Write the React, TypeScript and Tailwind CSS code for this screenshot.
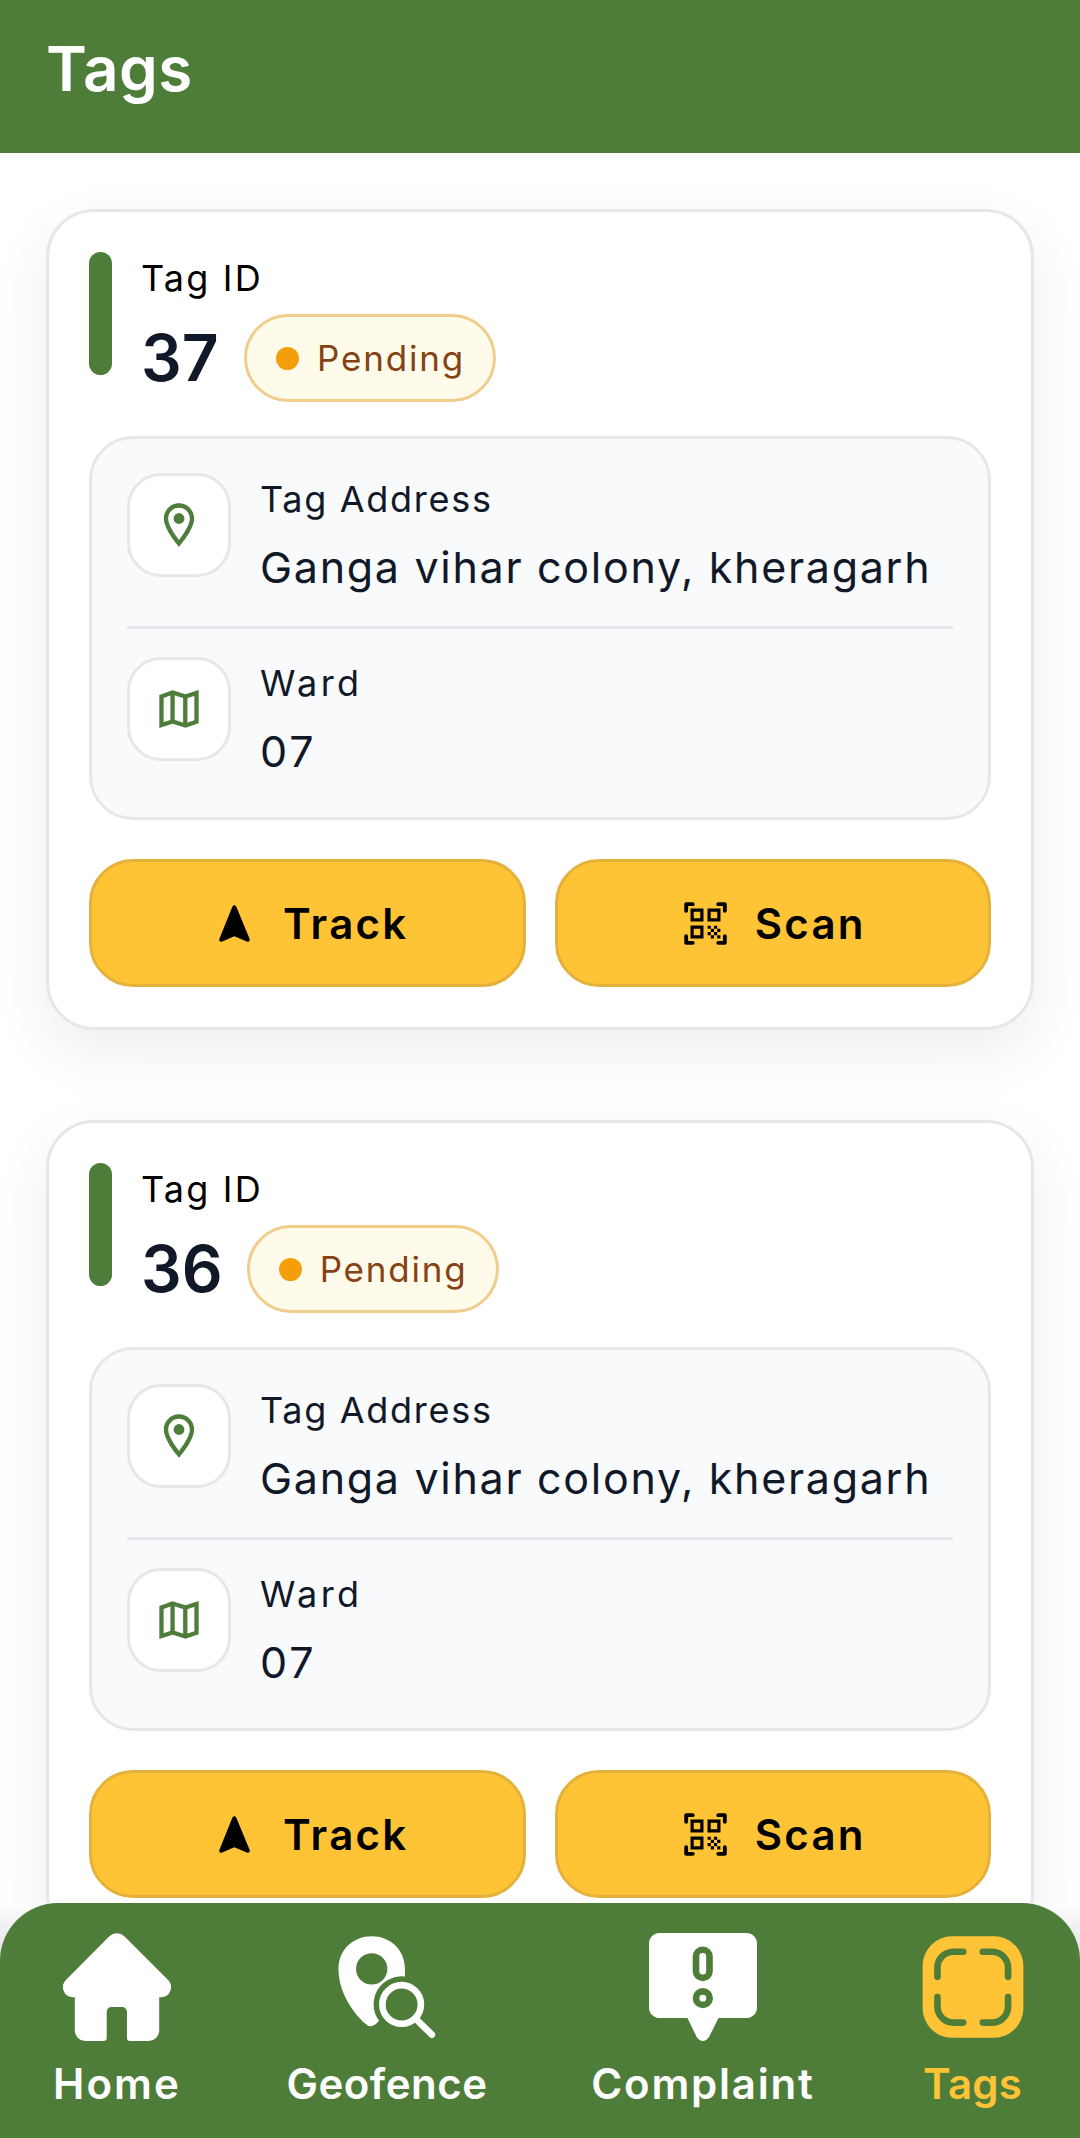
import type { ReactNode } from 'react'
import { MdOutlineLocationOn } from 'react-icons/md'

interface Tag {
  id: string
  status: string
  address: string
  ward: string
}

const TAGS: Tag[] = [
  { id: '37', status: 'Pending', address: 'Ganga vihar colony, kheragarh', ward: '07' },
  { id: '36', status: 'Pending', address: 'Ganga vihar colony, kheragarh', ward: '07' }
]

function MapIcon() {
  return (
    <svg viewBox="237 806 119 115" className="w-[40px] h-[38px] -mt-px" fill="none" stroke="currentColor" strokeWidth="13">
      <path d="M243.5 825.5L277 813.5L316 826L349.5 815V902L316 913.5L277 901.5L243.5 912Z" />
      <path d="M277 813V902M315.500 826V913" />
    </svg>
  )
}

function TrackIcon() {
  return (
    <svg viewBox="537 194 93 111" className="w-[31px] h-[37px] ml-[13px] mr-[9px]" fill="currentColor">
      <path d="M577 199Q583 191 589 199L629 296Q631 305 622 304L583 288L545 304Q536 305 538 296Z" />
    </svg>
  )
}

function ScanIcon() {
  return (
    <svg viewBox="0 0 24 24" className="size-[51px]" fill="currentColor">
      <path
        d="M2.900 6V2.900H6M18 2.900H21.100V6M2.900 18V21.100H6M21.100 18V21.100H18"
        fill="none"
        stroke="currentColor"
        strokeWidth="1.800"
        strokeLinecap="round"
        strokeLinejoin="round"
      />
      <path d="M5.700 5.700H10.300V10.300H5.700ZM13.700 5.700H18.300V10.300H13.700ZM5.700 13.700H10.300V18.300H5.700Z" fill="none" stroke="currentColor" strokeWidth="1.500" />
      <path d="M13 13h1.500v1.500H13zM16 13h1.500v1.500H16zM14.500 14.500H16V16h-1.500zM17.500 14.500H19V16h-1.500zM13 16h1.500v1.500H13zM16 16h1.500v1.500H16zM14.500 17.500H16V19h-1.500zM17.500 17.500H19V19h-1.500z" />
    </svg>
  )
}

function HomeIcon() {
  return (
    <svg viewBox="189 158 324 325" className="size-[108px]" fill="currentColor">
      <path d="M328 168A32 32 0 0 1 373 168L504 299A30 30 0 0 1 484 351H478V451A32 32 0 0 1 446 483H391A10 10 0 0 1 381 473V395A14 14 0 0 0 367 381H334A14 14 0 0 0 320 395V473A10 10 0 0 1 310 483H256A32 32 0 0 1 224 451V351H218A30 30 0 0 1 198 299Z" />
    </svg>
  )
}

function GeofenceIcon() {
  return (
    <svg viewBox="189 158 324 325" className="size-[108px]" fill="currentColor">
      <path
        fillRule="evenodd"
        d="M205 266C205 208 250 168 305 168S405 208 405 266V289A84 84 0 0 0 327 422Q305 450 285 430C245 394 205 332 205 266ZM258 266a47 47 0 1 0 94 0a47 47 0 1 0 -94 0Z"
      />
      <circle cx="395" cy="373" r="58" fill="none" stroke="currentColor" strokeWidth="20" />
      <path d="M436 415L486 464" stroke="currentColor" strokeWidth="20" strokeLinecap="round" />
    </svg>
  )
}

function ComplaintIcon() {
  return (
    <svg viewBox="328 158 325 325" className="size-[108px]" fill="currentColor">
      <rect x="328" y="158" width="325" height="256" rx="32" />
      <path d="M443 412L471 470Q490 496 509 470L538 412Z" />
      <g fill="none" stroke="#4e7d3a" strokeWidth="20">
        <rect x="469.500" y="208.500" width="40.500" height="84.500" rx="20" />
        <circle cx="490" cy="354" r="20.500" />
      </g>
    </svg>
  )
}

function TagsIcon() {
  return (
    <svg viewBox="238 158 325 325" className="size-[108px]">
      <rect x="249" y="168" width="303" height="305" rx="88" fill="currentColor" />
      <path
        d="M293.500 290V262A48 48 0 0 1 341 214.500H371M430 214.500H459A48 48 0 0 1 506 262V290M506 351V380A48 48 0 0 1 459 427.500H430M371 427.500H341A48 48 0 0 1 293.500 380V351"
        fill="none"
        stroke="#4e7d3a"
        strokeWidth="20"
        strokeLinecap="round"
      />
    </svg>
  )
}

function IconBox({ children }: { children: ReactNode }) {
  return (
    <div className="size-[104px] shrink-0 flex items-center justify-center rounded-[34px] border-[3px] border-[#e5e7eb] bg-white text-[#4e7d3a]">
      {children}
    </div>
  )
}

function TagCard({ tag }: { tag: Tag }) {
  return (
    <div className="h-[821px] shrink-0 rounded-[48px] border-[3px] border-[#e5e7eb] bg-white p-[40px] shadow-[0_22px_62px_rgba(0,0,0,0.07)]">
      <div className="flex h-[184px]">
        <div className="w-[23px] h-[123px] rounded-full bg-[#4e7d3a]" />
        <div className="ml-[29px] pt-[9px]">
          <div className="text-[36px] leading-[34px] tracking-[2.2px] text-black">Tag ID</div>
          <div className="mt-[19px] h-[88px] flex items-center">
            <span className="min-w-[79px] text-[64px] leading-[64px] font-semibold text-[#111827]">{tag.id}</span>
            <span className="ml-[24px] h-[88px] w-[252px] flex items-center rounded-full border-[3px] border-[#f1cd8c] bg-[#fffbeb] pl-[29px]">
              <span className="size-[23px] rounded-full bg-[#f59e0b]" />
              <span className="ml-[18px] text-[35px] leading-[34px] tracking-[1.8px] text-[#854214]">{tag.status}</span>
            </span>
          </div>
        </div>
      </div>

      <div className="h-[384px] rounded-[44px] border-[3px] border-[#e5e7eb] bg-[#f9fafc] px-[35px] pt-[34px] text-[#111827]">
        <div className="flex h-[156px] border-b-[3px] border-[#e5e7eb]">
          <IconBox>
            <MdOutlineLocationOn className="size-[52px]" />
          </IconBox>
          <div className="ml-[29px] pt-[9px] whitespace-nowrap">
            <div className="text-[36px] leading-[34px] tracking-[1.7px]">Tag Address</div>
            <div className="mt-[31px] text-[43px] leading-[41px] tracking-[1.7px]">{tag.address}</div>
          </div>
        </div>
        <div className="flex pt-[28px]">
          <IconBox>
            <MapIcon />
          </IconBox>
          <div className="ml-[29px] pt-[9px]">
            <div className="text-[36px] leading-[34px] tracking-[3.4px]">Ward</div>
            <div className="mt-[31px] text-[43px] leading-[41px] tracking-[3px]">{tag.ward}</div>
          </div>
        </div>
      </div>

      <div className="mt-[39px] grid grid-cols-2 gap-[29px]">
        <ActionButton icon={<TrackIcon />} label="Track" />
        <ActionButton icon={<ScanIcon />} label="Scan" />
      </div>
    </div>
  )
}

function ActionButton({ icon, label }: { icon: ReactNode; label: string }) {
  return (
    <button className="h-[128px] flex items-center justify-center gap-[24px] rounded-[44px] border-[3px] border-[#e4b13a] bg-[#ffc436] text-black">
      {icon}
      <span className="text-[42px] leading-[41px] font-semibold tracking-[2.3px]">{label}</span>
    </button>
  )
}

const NAV_ITEMS = [
  { label: 'Home', icon: <HomeIcon />, className: 'w-[234px] text-white tracking-[2.1px]' },
  { label: 'Geofence', icon: <GeofenceIcon />, className: 'w-[306px] text-white tracking-[0.5px]' },
  { label: 'Complaint', icon: <ComplaintIcon />, className: 'w-[326px] text-white tracking-[1.8px]' },
  { label: 'Tags', icon: <TagsIcon />, className: 'w-[213px] text-[#ffc436] tracking-[0.2px]' }
]

export default function App() {
  return (
    <div className="relative flex h-[2138px] w-[1080px] flex-col overflow-hidden bg-white font-['Inter',sans-serif]">
      <header className="h-[153px] shrink-0 bg-[#4e7d3a] px-[46px] pt-[38px]">
        <h1 className="text-[62px] leading-[61px] font-semibold tracking-[0.5px] text-white">Tags</h1>
      </header>

      <main className="flex min-h-0 flex-1 flex-col gap-[90px] px-[46px] pt-[56px]">
        {TAGS.map(tag => (
          <TagCard key={tag.id} tag={tag} />
        ))}
      </main>

      <div className="absolute inset-x-0 bottom-0 bg-linear-to-b from-[#fdfdfd] to-[#dedee2] to-[60px]">
        <nav className="flex h-[235px] rounded-t-[58px] bg-[#4e7d3a] pt-[30px]">
          {NAV_ITEMS.map(item => (
            <a key={item.label} className={`flex flex-col items-center text-[42px] leading-[41px] font-semibold ${item.className}`}>
              {item.icon}
              <span className="mt-[22px]">{item.label}</span>
            </a>
          ))}
        </nav>
      </div>
    </div>
  )
}
